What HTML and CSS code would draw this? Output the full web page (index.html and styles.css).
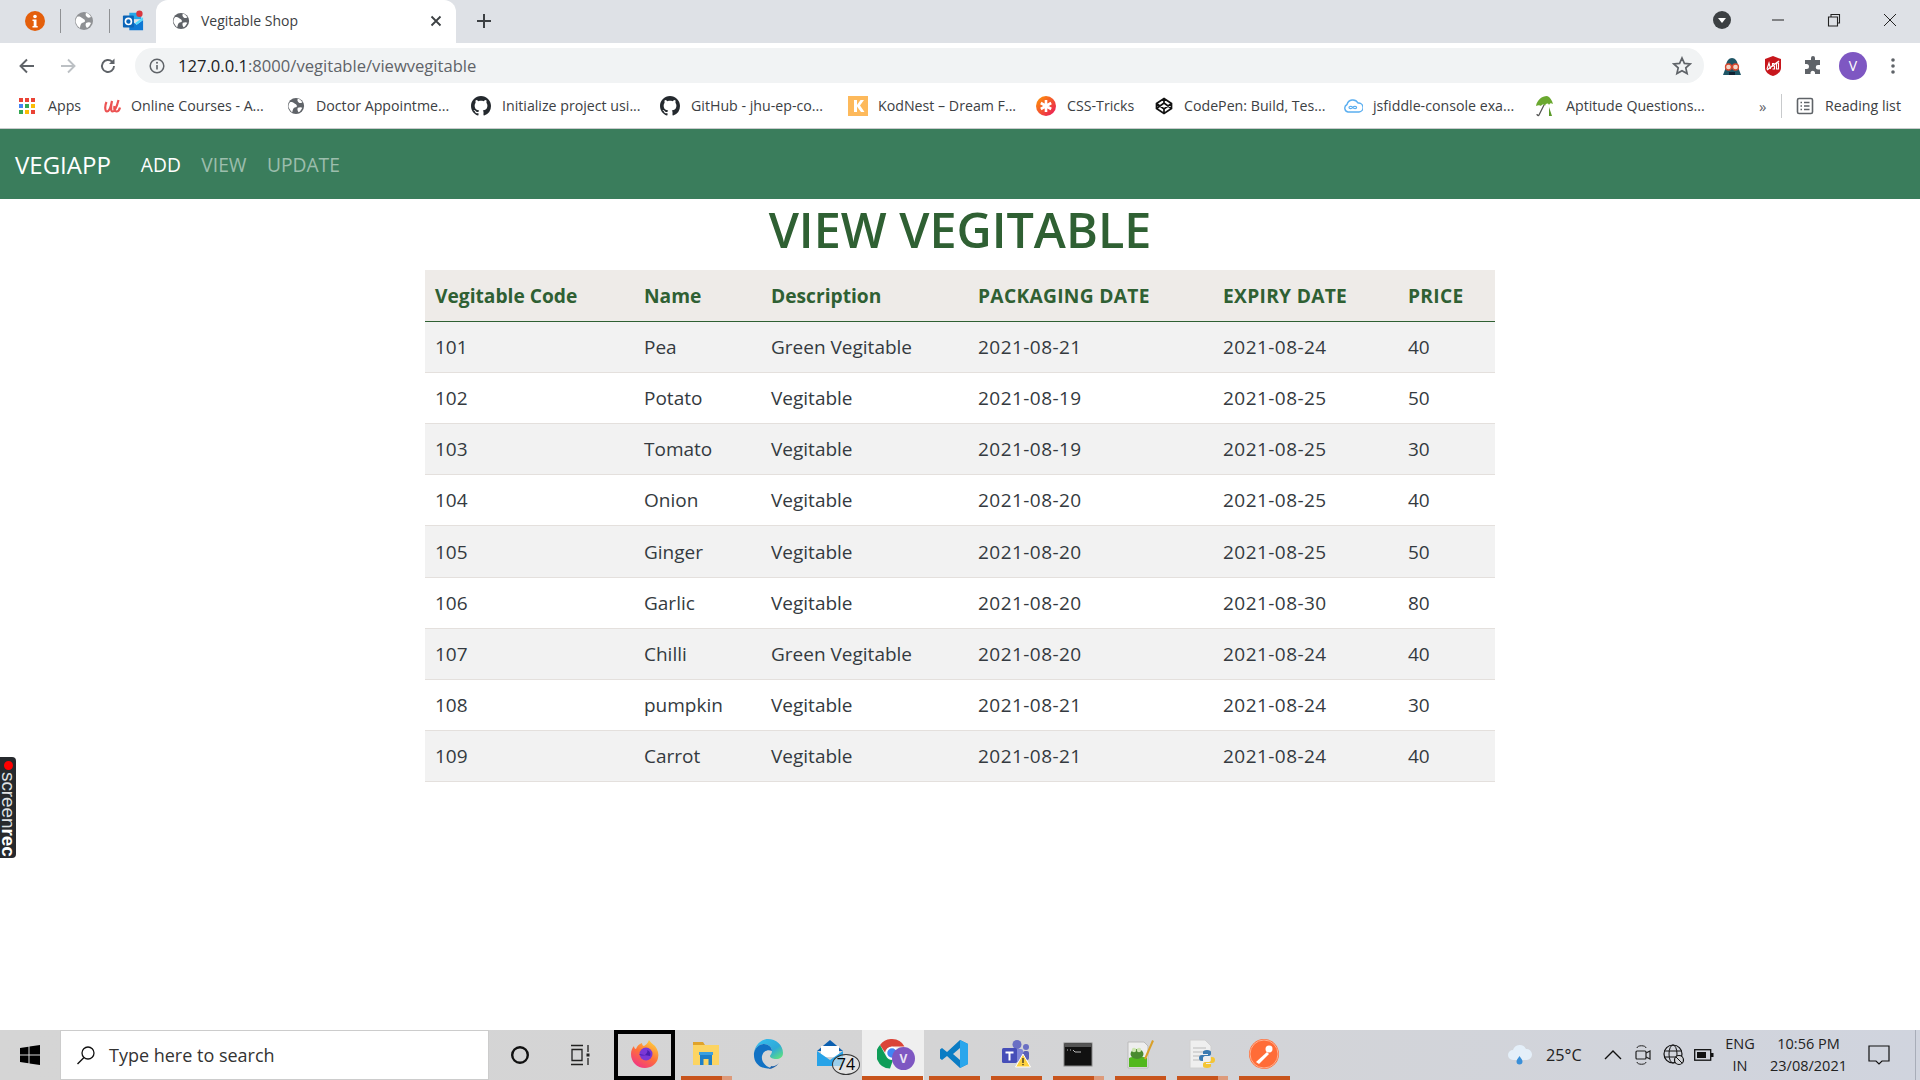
FILE: index.html
```html
<!DOCTYPE html>
<html lang="en">
<head>
<meta charset="utf-8">
<title>Vegitable Shop</title>
<link rel="stylesheet" href="styles.css">
</head>
<body>
<svg class="defs" width="0" height="0">
  <defs>
    <symbol id="globe" viewBox="0 0 20 20">
      <circle cx="10" cy="10" r="9" fill="currentColor"/>
      <path d="M3 6c2-1 4 0 5 1s3 1 3 3-3 1-4 3-1 4-1 4c-2-1-3-3-4-5s0-4 1-6zM12 2c2 0 4 2 5 4-2 1-3 1-4 0s-2-2-1-4zM12 12c2-1 4-1 5 0-1 2-2 4-4 5-1-1-2-3-1-5z" fill="#fff"/>
    </symbol>
    <symbol id="gh" viewBox="0 0 16 16">
      <path fill="#24292e" d="M8 0C3.58 0 0 3.58 0 8c0 3.54 2.29 6.53 5.47 7.59.4.07.55-.17.55-.38 0-.19-.01-.82-.01-1.49-2.01.37-2.53-.49-2.69-.94-.09-.23-.48-.94-.82-1.13-.28-.15-.68-.52-.01-.53.63-.01 1.08.58 1.23.82.72 1.21 1.87.87 2.33.66.07-.52.28-.87.51-1.07-1.78-.2-3.64-.89-3.64-3.95 0-.87.31-1.59.82-2.15-.08-.2-.36-1.02.08-2.12 0 0 .67-.21 2.2.82.64-.18 1.32-.27 2-.27s1.36.09 2 .27c1.53-1.04 2.2-.82 2.2-.82.44 1.1.16 1.92.08 2.12.51.56.82 1.27.82 2.15 0 3.07-1.87 3.75-3.65 3.95.29.25.54.73.54 1.48 0 1.07-.01 1.93-.01 2.2 0 .21.15.46.55.38A8.01 8.01 0 0 0 16 8c0-4.42-3.58-8-8-8z"/>
    </symbol>
  </defs>
</svg>

<header class="chrome">
  <div class="tabstrip">
    <div class="pins">
      <span class="pin">
        <svg class="ic20" viewBox="0 0 20 20"><circle cx="10" cy="10" r="10" fill="#e45f0b"/><circle cx="10" cy="5.5" r="1.8" fill="#fff"/><path d="M7.5 8.5h4v6.5h1.2v1.5H7.5V15h1.2v-5H7.5z" fill="#fff"/></svg>
      </span>
      <span class="pin-sep"></span>
      <span class="pin">
        <svg class="ic20 grey"><use href="#globe"/></svg>
      </span>
      <span class="pin-sep"></span>
      <span class="pin">
        <svg class="ic22" viewBox="0 0 24 24"><path d="M8 3h13v7H8z" fill="#28a8ea"/><path d="M8 10l8 6 7-5v11H8z" fill="#0f78d4"/><path d="M23 11l-7 5-2-1.500L23 8z" fill="#50d9ff"/><rect x="1" y="6" width="12" height="13" rx="1" fill="#0a64b8"/><circle cx="7" cy="12.500" r="3.300" fill="none" stroke="#fff" stroke-width="1.800"/><circle cx="19" cy="4" r="3.500" fill="#d9363e"/></svg>
      </span>
    </div>
    <div class="tab">
      <svg class="ic18 dark"><use href="#globe"/></svg>
      <span class="tab-title">Vegitable Shop</span>
      <svg class="tab-x" viewBox="0 0 12 12"><path d="M1.500 1.500l9 9M10.500 1.500l-9 9" stroke="#3c4043" stroke-width="1.800"/></svg>
    </div>
    <svg class="newtab" viewBox="0 0 16 16"><path d="M8 1v14M1 8h14" stroke="#3c4043" stroke-width="2"/></svg>
    <div class="winctl">
      <svg class="tabsearch" viewBox="0 0 18 18"><circle cx="9" cy="9" r="9" fill="#3c4043"/><path d="M5 7h8l-4 5z" fill="#fff"/></svg>
      <span class="wbtn"><svg class="ic14" viewBox="0 0 14 14"><path d="M1 7h12" stroke="#222" stroke-width="1"/></svg></span>
      <span class="wbtn"><svg class="ic14" viewBox="0 0 14 14"><path d="M1.500 4h9v9h-9zM4 4V1.500h8.500v8.500H10.500" fill="none" stroke="#222" stroke-width="1.100"/></svg></span>
      <span class="wbtn"><svg class="ic14" viewBox="0 0 14 14"><path d="M1 1l12 12M13 1L1 13" stroke="#222" stroke-width="1"/></svg></span>
    </div>
  </div>

  <div class="toolbar">
    <div class="navbtns">
      <svg class="ic18" viewBox="0 0 18 18"><path d="M16 9H3M9 2.500L2.500 9 9 15.500" fill="none" stroke="#5f6368" stroke-width="1.900"/></svg>
      <svg class="ic18" viewBox="0 0 18 18"><path d="M2 9h13M9 2.500L15.500 9 9 15.500" fill="none" stroke="#bcc0c4" stroke-width="1.900"/></svg>
      <svg class="ic18" viewBox="0 0 18 18"><path d="M15 9a6 6 0 1 1-1.800-4.300" fill="none" stroke="#5f6368" stroke-width="1.900"/><path d="M15.500 1.500v5.500H10z" fill="#5f6368"/></svg>
    </div>
    <div class="omnibox">
      <svg class="ic16" viewBox="0 0 16 16"><circle cx="8" cy="8" r="6.800" fill="none" stroke="#5f6368" stroke-width="1.500"/><path d="M8 7v4.500" stroke="#5f6368" stroke-width="1.600"/><circle cx="8" cy="4.800" r="1" fill="#5f6368"/></svg>
      <span class="url"><span class="url-host">127.0.0.1</span>:8000/vegitable/viewvegitable</span>
      <svg class="star" viewBox="0 0 20 20"><path d="M10 2l2.400 5.400 5.800.6-4.400 3.900 1.300 5.700L10 14.700l-5.100 2.900 1.300-5.700L1.800 8l5.800-.6z" fill="none" stroke="#5f6368" stroke-width="1.700"/></svg>
    </div>
    <div class="exts">
      <svg class="ic22" viewBox="0 0 22 22"><path d="M2 20c1-3 2-5 3-8 0-6 3-9 6-9s6 3 6 9c1 3 2 5 3 8z" fill="#1f5666"/><circle cx="7.500" cy="12" r="3" fill="#f4d7c8" stroke="#d8482e" stroke-width="1.300"/><circle cx="14.500" cy="12" r="3" fill="#f4d7c8" stroke="#d8482e" stroke-width="1.300"/><path d="M8 17h6v3H8z" fill="#123"/></svg>
      <svg class="ic22" viewBox="0 0 22 22"><path d="M11 1l8 3v9c0 4-4 7-8 8-4-1-8-4-8-8V4z" fill="#c7161c"/><path d="M5 15L17 6" stroke="#fff" stroke-width="1.400"/><path d="M5 14l2-6 1.500 6M12.500 8.500h-2v2.500h2v3h-2M14.500 8h2v6h-2z" fill="none" stroke="#fff" stroke-width="1.100"/></svg>
      <svg class="ic20" viewBox="0 0 20 20"><path d="M8 2a2 2 0 0 1 4 0v2h5v5h-2a2.200 2.200 0 0 0 0 4.500h2V18h-5v-1.500a2.300 2.300 0 0 0-4.500 0V18H2v-5h1.500a2.500 2.500 0 0 0 0-5H2V4h6z" fill="#5f6368"/></svg>
      <span class="avatar">V</span>
      <svg class="kebab" viewBox="0 0 4 18"><circle cx="2" cy="3" r="1.800" fill="#5f6368"/><circle cx="2" cy="9" r="1.800" fill="#5f6368"/><circle cx="2" cy="15" r="1.800" fill="#5f6368"/></svg>
    </div>
  </div>

  <nav class="bookmarks">
    <a class="bm bm-apps">
      <svg class="ic16" viewBox="0 0 16 16"><g><rect x="0" y="0" width="4" height="4" fill="#ea4335"/><rect x="6" y="0" width="4" height="4" fill="#ea4335"/><rect x="12" y="0" width="4" height="4" fill="#ea4335"/><rect x="0" y="6" width="4" height="4" fill="#4285f4"/><rect x="6" y="6" width="4" height="4" fill="#34a853"/><rect x="12" y="6" width="4" height="4" fill="#fbbc05"/><rect x="0" y="12" width="4" height="4" fill="#34a853"/><rect x="6" y="12" width="4" height="4" fill="#fbbc05"/><rect x="12" y="12" width="4" height="4" fill="#ea4335"/></g></svg>
      <span>Apps</span>
    </a>
    <a class="bm bm-udemy">
      <svg class="ic18" viewBox="0 0 18 18"><path d="M3.500 5C1.500 9 2 14.500 4 14.500S8 9 9 4M9 4c-1 4-1.500 10.500.5 10.500S14 9 15.500 3M11.500 9c-.5 3 0 5.500 2 5.500s3-2 3.500-4" fill="none" stroke="#ec5252" stroke-width="2.200"/></svg>
      <span>Online Courses - A...</span>
    </a>
    <a class="bm bm-doctor">
      <svg class="ic18 dark"><use href="#globe"/></svg>
      <span>Doctor Appointme...</span>
    </a>
    <a class="bm bm-init">
      <svg class="ic20"><use href="#gh"/></svg>
      <span>Initialize project usi...</span>
    </a>
    <a class="bm bm-gh">
      <svg class="ic20"><use href="#gh"/></svg>
      <span>GitHub - jhu-ep-co...</span>
    </a>
    <a class="bm bm-kod">
      <svg class="ic20" viewBox="0 0 20 20"><rect width="20" height="20" fill="#fdb95b"/><path d="M6 4h3v5l3.500-5H16l-4 5.500L16.500 16H13l-4-5.500V16H6z" fill="#fff"/></svg>
      <span>KodNest – Dream F...</span>
    </a>
    <a class="bm bm-css">
      <svg class="ic20" viewBox="0 0 20 20"><defs><linearGradient id="cssg" x1="0" y1="0" x2="1" y2="1"><stop offset="0" stop-color="#ff9a00"/><stop offset="1" stop-color="#e8125f"/></linearGradient></defs><circle cx="10" cy="10" r="10" fill="url(#cssg)"/><path d="M10 4v12M4.800 7l10.400 6M15.200 7L4.800 13" stroke="#fff" stroke-width="2.600"/></svg>
      <span>CSS-Tricks</span>
    </a>
    <a class="bm bm-pen">
      <svg class="ic18" viewBox="0 0 18 18"><path d="M9 1.500l7.500 5v5L9 16.500l-7.500-5v-5zM9 1.500v4.500M9 12v4.500M1.500 6.500L9 12l7.500-5.500M1.500 11.500L9 6l7.500 5.500" fill="none" stroke="#111" stroke-width="1.700"/></svg>
      <span>CodePen: Build, Tes...</span>
    </a>
    <a class="bm bm-fiddle">
      <svg class="ic20" viewBox="0 0 20 20"><path d="M5 16a4 4 0 0 1-1-7.500 6 6 0 0 1 11-1.500 4.500 4.500 0 0 1 1 9z" fill="none" stroke="#5aaef0" stroke-width="1.400"/><path d="M9.800 11.500c-1-1.500-3.800-1.500-3.800 0s2.800 1.500 3.800 0 3.800-1.500 3.800 0-2.800 1.500-3.800 0z" fill="none" stroke="#5aaef0" stroke-width="1.200"/></svg>
      <span>jsfiddle-console exa...</span>
    </a>
    <a class="bm bm-apt">
      <svg class="ic22" viewBox="0 0 22 22"><path d="M3 11C4 5 9 1 14 1c3 1 5 4 6 8-2-1-3-1-4 1-1-2-3-2-4 1-1-2-3-2-4 0-1-1-3-1-5 0z" fill="#6aa82f"/><path d="M11 10L6 20c-.5 1-2 .5-2-1" fill="none" stroke="#555" stroke-width="1.300"/><path d="M16 12l3 9h-3z" fill="#5a9a2a"/></svg>
      <span>Aptitude Questions...</span>
    </a>
    <span class="more">»</span>
    <span class="bm-sep"></span>
    <a class="bm bm-read">
      <svg class="ic18" viewBox="0 0 18 18"><rect x="1.500" y="1.500" width="15" height="15" rx="1.500" fill="none" stroke="#5f6368" stroke-width="1.600"/><path d="M4.500 5.500h1.500M8 5.500h5.500M4.500 9h1.500M8 9h5.500M4.500 12.500h1.500M8 12.500h5.500" stroke="#5f6368" stroke-width="1.500"/></svg>
      <span>Reading list</span>
    </a>
  </nav>
</header>

<div class="appnav">
  <a class="brand">VEGIAPP</a>
  <a class="navlink active">ADD</a>
  <a class="navlink">VIEW</a>
  <a class="navlink">UPDATE</a>
</div>

<main class="content">
  <h1 class="title">VIEW VEGITABLE</h1>
  <table class="veg">
    <colgroup>
      <col class="c1"><col class="c2"><col class="c3"><col class="c4"><col class="c5"><col class="c6">
    </colgroup>
    <thead>
      <tr><th>Vegitable Code</th><th>Name</th><th>Description</th><th class="caps">PACKAGING DATE</th><th class="caps">EXPIRY DATE</th><th class="caps">PRICE</th></tr>
    </thead>
    <tbody>
      <tr><td>101</td><td>Pea</td><td>Green Vegitable</td><td class="date">2021-08-21</td><td class="date">2021-08-24</td><td>40</td></tr>
      <tr><td>102</td><td>Potato</td><td>Vegitable</td><td class="date">2021-08-19</td><td class="date">2021-08-25</td><td>50</td></tr>
      <tr><td>103</td><td>Tomato</td><td>Vegitable</td><td class="date">2021-08-19</td><td class="date">2021-08-25</td><td>30</td></tr>
      <tr><td>104</td><td>Onion</td><td>Vegitable</td><td class="date">2021-08-20</td><td class="date">2021-08-25</td><td>40</td></tr>
      <tr><td>105</td><td>Ginger</td><td>Vegitable</td><td class="date">2021-08-20</td><td class="date">2021-08-25</td><td>50</td></tr>
      <tr><td>106</td><td>Garlic</td><td>Vegitable</td><td class="date">2021-08-20</td><td class="date">2021-08-30</td><td>80</td></tr>
      <tr><td>107</td><td>Chilli</td><td>Green Vegitable</td><td class="date">2021-08-20</td><td class="date">2021-08-24</td><td>40</td></tr>
      <tr><td>108</td><td>pumpkin</td><td>Vegitable</td><td class="date">2021-08-21</td><td class="date">2021-08-24</td><td>30</td></tr>
      <tr><td>109</td><td>Carrot</td><td>Vegitable</td><td class="date">2021-08-21</td><td class="date">2021-08-24</td><td>40</td></tr>
    </tbody>
  </table>
</main>

<div class="screenrec"><span class="rec-dot"></span><span class="rec-text">screen<b>rec</b></span></div>

<footer class="taskbar">
  <span class="start">
    <svg class="ic20" viewBox="0 0 20 20"><path d="M0 3l8.500-1.300V9.500H0zM9.500 1.500L20 0v9.500H9.500zM0 10.500h8.500v7.800L0 17zM9.500 10.500H20V20L9.500 18.500z" fill="#000"/></svg>
  </span>
  <div class="search">
    <svg class="ic20" viewBox="0 0 20 20"><circle cx="12" cy="8" r="6" fill="none" stroke="#111" stroke-width="1.300"/><path d="M8 12.500L1.500 19" stroke="#111" stroke-width="1.500"/></svg>
    <span>Type here to search</span>
  </div>
  <span class="tb-tool tb-cortana"><svg class="ic20" viewBox="0 0 20 20"><circle cx="10" cy="10" r="7.800" fill="none" stroke="#111" stroke-width="2.400"/></svg></span>
  <span class="tb-tool tb-view"><svg class="ic22" viewBox="0 0 22 22"><path d="M2 1.500h12M2 20.500h12M3 5.500h10v11H3z" fill="none" stroke="#222" stroke-width="1.300"/><path d="M19 1v7M19 14v7" stroke="#222" stroke-width="1.300"/><rect x="17.500" y="9.500" width="3" height="3" fill="#222"/></svg></span>
  <div class="apps">
    <span class="app app-ff">
      <svg class="ic30" viewBox="0 0 30 30"><defs><linearGradient id="ffg" x1="0.800" y1="0" x2="0.200" y2="1"><stop offset="0" stop-color="#ffd43a"/><stop offset="0.500" stop-color="#ff7139"/><stop offset="1" stop-color="#f0308a"/></linearGradient></defs><path d="M19 1c2 3 4 4 6 6 3 4 4 8 3 12-1 6-7 10-13 10C7 29 1 23 1 15c0-3 1-6 3-8 0 2 1 3 2 3 1-3 3-5 6-6 0 2 1 3 2 3 2-1 4-3 5-6z" fill="url(#ffg)"/><circle cx="16" cy="15" r="6.500" fill="#7b37d6"/><path d="M9 15c2 2 5 2 7 0 1-1 2-3 1-4 3 1 4 4 3 6" fill="#4a1fb0"/></svg>
    </span>
    <span class="app run multi">
      <svg class="ic30" viewBox="0 0 30 30"><path d="M2 3h10l2 3H2z" fill="#e0a32a"/><rect x="2" y="6" width="26" height="20" fill="#fcd462"/><rect x="9" y="15" width="12" height="11" fill="#1e7fc8"/><rect x="12.500" y="20" width="5" height="6" fill="#fcd462"/><path d="M8 13h14v3H8z" fill="#3ba0e0"/></svg>
    </span>
    <span class="app">
      <svg class="ic30" viewBox="0 0 30 30"><defs><linearGradient id="edg" x1="0" y1="0" x2="1" y2="1"><stop offset="0" stop-color="#35c1f1"/><stop offset="0.600" stop-color="#2fa9d8"/><stop offset="1" stop-color="#66eb6e"/></linearGradient></defs><path d="M15 0c8 0 15 6 15 14 0 4-3 6-7 6-3 0-6-1-6-3 0-1 2-2 2-5 0-4-4-7-8-7-5 0-9 4-10 9C2 6 8 0 15 0z" fill="url(#edg)"/><path d="M1 14c1-5 5-9 10-9 4 0 8 3 8 7-4-2-9 0-10 5-1 6 4 11 9 12-9 2-18-4-17-15z" fill="#1172c4"/><path d="M26 24c-3 4-7 6-11 6 2-1 3-2 3-3 3 1 6-1 8-3z" fill="#1b5fa8"/></svg>
    </span>
    <span class="app app-mail">
      <svg class="ic30" viewBox="0 0 30 30"><path d="M15 1l13 11H2z" fill="#0a5fb0"/><rect x="6" y="7" width="18" height="11" fill="#fff"/><path d="M2 12l13 9 13-9v15H2z" fill="#27a3e8"/></svg>
      <span class="badge">74</span>
    </span>
    <span class="app run active">
      <svg class="ic30" viewBox="0 0 30 30"><path d="M15 0a14 14 0 0 1 12.500 7.500H15a7 7 0 0 0-7 6L3 6A14 14 0 0 1 15 0z" fill="#db4437"/><path d="M3 6l6 11a7 7 0 0 0 7 4l-3 8.500A14 14 0 0 1 3 6z" fill="#0f9d58"/><circle cx="15" cy="14" r="5.500" fill="#4285f4" stroke="#fff" stroke-width="1.500"/></svg>
      <span class="chrome-v">V</span>
    </span>
    <span class="app run">
      <svg class="ic30" viewBox="0 0 30 30"><path d="M21 1l8 4v20l-8 4-13-12-5 4-2-1.500v-9L3 9l5 4z" fill="#0a7cc4"/><path d="M21 1l8 4v20l-8 4z" fill="#2aa6ec"/><path d="M21 9l-7 6 7 6z" fill="#d4d4d4"/></svg>
    </span>
    <span class="app run">
      <svg class="ic30" viewBox="0 0 30 30"><circle cx="16" cy="5.500" r="4.500" fill="#6a6fc4"/><circle cx="25" cy="8" r="3" fill="#6a6fc4"/><rect x="11" y="10" width="11" height="13" rx="2" fill="#7f85d6"/><rect x="22" y="12" width="6" height="9" rx="2" fill="#5a60b8"/><rect x="1" y="9" width="15" height="15" rx="1.500" fill="#464eb8"/><path d="M4.500 12.500h8v2h-3v7h-2v-7h-3z" fill="#fff"/><path d="M22 15l7.500 13h-15z" fill="#ffd23e" stroke="#fff" stroke-width="1"/><path d="M21.400 19h1.200v5h-1.200zM21.400 25h1.200v1.300h-1.200z" fill="#222"/></svg>
    </span>
    <span class="app run multi">
      <svg class="ic30" viewBox="0 0 30 30"><rect x="1" y="4" width="28" height="23" fill="#111" stroke="#888" stroke-width="1"/><rect x="1.500" y="4.500" width="27" height="3.500" fill="#555"/><path d="M4 11h1M7 11h1M10 11l2 2h6" stroke="#bbb" stroke-width="1" fill="none"/></svg>
    </span>
    <span class="app run">
      <svg class="ic30" viewBox="0 0 30 30"><path d="M3 3h16l4 4v22H3z" fill="#eee" stroke="#bbb"/><path d="M4 19c4-2 14-2 18 0v9H4z" fill="#52b81e"/><ellipse cx="12" cy="15" rx="6.500" ry="5" fill="#4a8a30"/><circle cx="9" cy="11" r="2.200" fill="#cde6b0"/><circle cx="14" cy="11" r="2.200" fill="#cde6b0"/><path d="M20 20L28 1.500" stroke="#d9a02a" stroke-width="2"/></svg>
    </span>
    <span class="app run multi">
      <svg class="ic30" viewBox="0 0 30 30"><path d="M3 1h15l6 6v22H3z" fill="#efefef" stroke="#d0d0d0"/><path d="M6 9h13M6 13h11M6 17h9M6 21h9" stroke="#bbb"/><path d="M20 11c-3 0-4 1-4 2v2h5v1h-6c-2 0-3 1-3 3s1 3 3 3h1v-3c0-1 1-2 2-2h4c1 0 2-1 2-2v-2c0-1-1-2-4-2z" fill="#3b7ab0"/><path d="M20 29c3 0 4-1 4-2v-2h-5v-1h6c2 0 3-1 3-3s-1-3-3-3h-1v3c0 1-1 2-2 2h-4c-1 0-2 1-2 2v2c0 1 1 2 4 2z" fill="#f4c534"/></svg>
    </span>
    <span class="app run">
      <svg class="ic30" viewBox="0 0 30 30"><circle cx="15" cy="15" r="15" fill="#ff6c37"/><circle cx="15" cy="15" r="14" fill="none" stroke="#ffb08f" stroke-width="1"/><path d="M7 23l11-10 2 2-10 10z" fill="#fff"/><circle cx="20" cy="10" r="3.500" fill="#fff"/></svg>
    </span>
  </div>
  <div class="tray">
    <svg class="tr-cloud" viewBox="0 0 26 22"><path d="M6 16a5 5 0 0 1 0-10 7 7 0 0 1 13-1 5.500 5.500 0 0 1 1 11z" fill="#e4eff9"/><path d="M12.500 12c2 3 3 4 3 5.500a3 3 0 0 1-6 0c0-1.500 1-2.500 3-5.500z" fill="#3a8fd8"/></svg>
    <span class="tr-temp">25°C</span>
    <svg class="tr-chev" viewBox="0 0 18 10"><path d="M1 9l8-8 8 8" fill="none" stroke="#111" stroke-width="1.400"/></svg>
    <svg class="tr-cam" viewBox="0 0 18 22"><path d="M3 4c0-3 9-3 9 0M3 18c0 3 9 3 9 0" fill="none" stroke="#222"/><rect x="2" y="7" width="10" height="8" rx="1" fill="none" stroke="#222" stroke-width="1.200"/><path d="M12 9l4-2v8l-4-2" fill="none" stroke="#222" stroke-width="1.200"/></svg>
    <svg class="tr-globe" viewBox="0 0 22 22"><circle cx="10" cy="10" r="9" fill="none" stroke="#111" stroke-width="1.200"/><ellipse cx="10" cy="10" rx="4" ry="9" fill="none" stroke="#111" stroke-width="1"/><path d="M1 7h18M1 13h18" stroke="#111"/><circle cx="16" cy="16" r="4.500" fill="#d2d4d8" stroke="#111" stroke-width="1.200"/><path d="M13 13l6 6" stroke="#111"/></svg>
    <svg class="tr-batt" viewBox="0 0 20 12"><rect x="0.700" y="0.700" width="16" height="10.500" fill="none" stroke="#111" stroke-width="1.300"/><rect x="3" y="3" width="9" height="6" fill="#111"/><rect x="17" y="4" width="2.500" height="4" fill="#111"/></svg>
    <div class="tr-lang"><span>ENG</span><span>IN</span></div>
    <div class="tr-clock"><span>10:56 PM</span><span>23/08/2021</span></div>
    <svg class="tr-note" viewBox="0 0 22 22"><path d="M1 2h20v15h-7l-3 3-3-3H1z" fill="none" stroke="#111" stroke-width="1.200"/></svg>
    <span class="tr-show"></span>
  </div>
</footer>
</body>
</html>
```

FILE: styles.css
```css
* { box-sizing: border-box; }
html, body { margin: 0; padding: 0; }
body {
  width: 1920px;
  height: 1080px;
  overflow: hidden;
  display: flex;
  flex-direction: column;
  position: relative;
  background: #fff;
  font-family: "Open Sans", "Noto Sans", "Liberation Sans", sans-serif;
  color: #212529;
}
.defs { position: absolute; }
svg { display: block; flex: none; }
.ic14 { width: 14px; height: 14px; }
.ic16 { width: 16px; height: 16px; }
.ic18 { width: 18px; height: 18px; }
.ic20 { width: 20px; height: 20px; }
.ic22 { width: 22px; height: 22px; }
.ic30 { width: 30px; height: 30px; }
.grey { color: #8f9194; }
.dark { color: #5f6368; }

/* Browser chrome */
.chrome { flex: none; }
.tabstrip {
  height: 43px;
  background: #dee1e6;
  display: flex;
  align-items: center;
}
.pins { width: 156px; display: flex; align-items: center; padding: 0 0 2px 25px; }
.pin { width: 20px; display: flex; justify-content: center; }
.pin-sep { width: 1px; height: 24px; background: #8f9194; margin: 0 13px 0 15px; }
.tab {
  width: 300px;
  height: 43px;
  background: #fff;
  border-radius: 12px 12px 0 0;
  display: flex;
  align-items: center;
  padding: 0 0 2px 16px;
  color: #5f6368;
}
.tab-title { margin-left: 11px; font-size: 14px; color: #3c4043; flex: 1; }
.tab-x { width: 12px; height: 12px; margin-right: 14px; }
.newtab { width: 16px; height: 16px; margin: 0 0 2px 20px; }
.winctl { margin-left: auto; display: flex; align-items: center; padding: 0 2px 3px 0; }
.tabsearch { width: 18px; height: 18px; margin-right: 19px; }
.wbtn { width: 56px; display: flex; justify-content: center; }

.toolbar {
  height: 40px;
  display: flex;
  align-items: flex-start;
  background: #fff;
}
.navbtns {
  width: 135px;
  height: 35px;
  margin-top: 5px;
  padding-left: 18px;
  display: flex;
  align-items: center;
  gap: 22.5px;
}
.omnibox {
  width: 1569px;
  height: 35px;
  margin-top: 5px;
  border-radius: 18px;
  background: #f1f3f4;
  display: flex;
  align-items: center;
  padding-left: 14px;
}
.url { margin-left: 13px; font-size: 16.6px; color: #5f6368; flex: 1; }
.url-host { color: #202124; }
.star { width: 20px; height: 20px; margin-right: 12px; }
.exts {
  flex: 1;
  height: 35px;
  margin-top: 5px;
  padding-left: 17px;
  display: flex;
  align-items: center;
  gap: 19px;
}
.avatar {
  width: 28px;
  height: 28px;
  margin-left: -3px;
  border-radius: 50%;
  background: #7e57c2;
  color: #fff;
  font-size: 14px;
  display: flex;
  align-items: center;
  justify-content: center;
}
.kebab { width: 4px; height: 18px; margin-left: 5px; }

.bookmarks {
  height: 46px;
  border-bottom: 1px solid #c8cacc;
  display: flex;
  align-items: center;
  padding-left: 19px;
  font-size: 14.2px;
  color: #3c4043;
}
.bm { display: flex; align-items: center; gap: 11px; white-space: nowrap; flex: none; }
.bm-apps { width: 84px; gap: 13px; }
.bm-udemy { width: 184px; gap: 10px; }
.bm-doctor { width: 184px; }
.bm-init { width: 189px; }
.bm-gh { width: 188px; }
.bm-kod { width: 188px; gap: 10px; }
.bm-css { width: 119px; }
.bm-pen { width: 188px; }
.bm-fiddle { width: 190px; gap: 10px; }
.bm-apt { width: 226px; }
.more { width: 22px; font-size: 15px; color: #5f6368; }
.bm-sep { width: 1px; height: 24px; background: #c8cacc; margin-right: 14px; }

/* App navbar */
.appnav {
  height: 70px;
  flex: none;
  background: #3a7d5c;
  display: flex;
  align-items: center;
  padding-left: 15px;
}
.brand { color: #fff; font-size: 24px; margin-right: 30px; }
.navlink { color: rgba(255, 255, 255, .5); font-size: 19.2px; margin-right: 20.5px; }
.navlink.active { color: #fff; }

/* Content */
.content { flex: 1; display: flex; flex-direction: column; align-items: center; }
.title {
  margin: 0;
  height: 71px;
  font-size: 48.5px;
  line-height: 60px;
  font-weight: 600;
  color: #2f6033;
}
.veg {
  width: 1070px;
  table-layout: fixed;
  border-collapse: collapse;
  font-size: 19px;
}
.c1 { width: 209px; }
.c2 { width: 127px; }
.c3 { width: 207px; }
.c4 { width: 245px; }
.c5 { width: 185px; }
.c6 { width: 97px; }
.veg th, .veg td { height: 51.200px; padding: 0 10px; text-align: left; font-weight: 400; white-space: nowrap; }
.veg th { font-size: 19.2px; font-weight: 700; color: #2f6033; background: #eeebe8; border-bottom: 1px solid #2f6033; }
.veg th.caps { letter-spacing: .3px; }
.veg td { border-bottom: 1px solid #e4e0dd; color: #343a40; }
.veg td.date { letter-spacing: .45px; }
.veg tbody tr:nth-child(odd) td { background: #f2f2f2; }

/* Screenrec */
.screenrec {
  position: absolute;
  left: 0;
  top: 757px;
  width: 16px;
  height: 101px;
  background: #26292d;
  border-radius: 0 4px 4px 0;
  display: flex;
  flex-direction: column;
  align-items: center;
  padding-top: 4px;
  font-family: "Liberation Sans", sans-serif;
}
.rec-dot { width: 9px; height: 9px; border-radius: 50%; background: #f00; margin-bottom: 2px; }
.rec-text { writing-mode: vertical-rl; color: #dfe1e3; font-size: 19px; line-height: 16px; letter-spacing: -.1px; }
.rec-text b { color: #fff; }

/* Taskbar */
.taskbar {
  height: 50px;
  flex: none;
  background: linear-gradient(90deg, #d5d5d5 0%, #d4d4d5 50%, #d0d4de 100%);
  display: flex;
  align-items: center;
  font-size: 18px;
}
.start { width: 60px; display: flex; justify-content: center; }
.search {
  width: 429px;
  height: 50px;
  background: #fff;
  border: 1px solid #ccc;
  display: flex;
  align-items: center;
  padding-left: 15px;
  gap: 13px;
  color: #333;
}
.tb-tool { display: flex; justify-content: center; width: 60px; }
.tb-cortana { margin-left: 1px; }
.tb-view { margin-right: 4px; }
.apps { display: flex; height: 50px; }
.app { width: 62px; height: 50px; display: flex; align-items: center; justify-content: center; position: relative; padding: 0 2px 2px 0; }
.app-ff { border: 4px solid #000; width: 61px; margin-right: 1px; padding: 0 0 2px 0; }
.app.run::after {
  content: "";
  position: absolute;
  left: 5px;
  width: 51px;
  bottom: 0;
  height: 4px;
  background: #c8541c;
}
.app.multi::before {
  content: "";
  position: absolute;
  left: 46px;
  width: 10px;
  bottom: 0;
  height: 4px;
  background: #dd9a7a;
  z-index: 1;
}
.app.active { background: #efefef; }
.app.active::after { left: 0; width: 61px; }
.badge {
  position: absolute;
  right: 2px;
  bottom: 5px;
  width: 28px;
  height: 21px;
  border-radius: 50%;
  border: 1px solid #333;
  background: rgba(235, 235, 235, .6);
  font-size: 16px;
  line-height: 19px;
  text-align: center;
  color: #000;
}
.chrome-v {
  position: absolute;
  left: 30px;
  top: 17px;
  width: 23px;
  height: 23px;
  border-radius: 50%;
  background: #7e57c2;
  color: #e9e3f5;
  font-size: 12px;
  font-weight: 700;
  display: flex;
  align-items: center;
  justify-content: center;
}
.tray { margin-left: auto; display: flex; align-items: center; height: 50px; font-size: 14.500px; color: #222; }
.tr-cloud { width: 26px; height: 22px; margin-right: 13px; }
.tr-temp { font-size: 16.200px; width: 40px; margin-right: 18px; }
.tr-chev { width: 18px; height: 10px; margin-right: 12px; }
.tr-cam { width: 18px; height: 22px; margin-right: 11px; }
.tr-globe { width: 22px; height: 22px; margin-right: 9px; }
.tr-batt { width: 20px; height: 12px; margin-right: 8px; }
.tr-lang, .tr-clock { display: flex; flex-direction: column; align-items: center; line-height: 22px; }
.tr-lang { width: 36px; margin-right: 8px; }
.tr-clock { width: 85px; margin-right: 17px; }
.tr-note { width: 22px; height: 22px; margin-right: 25px; }
.tr-show { width: 1px; height: 50px; background: #a8adb8; margin-right: 4px; }
```
